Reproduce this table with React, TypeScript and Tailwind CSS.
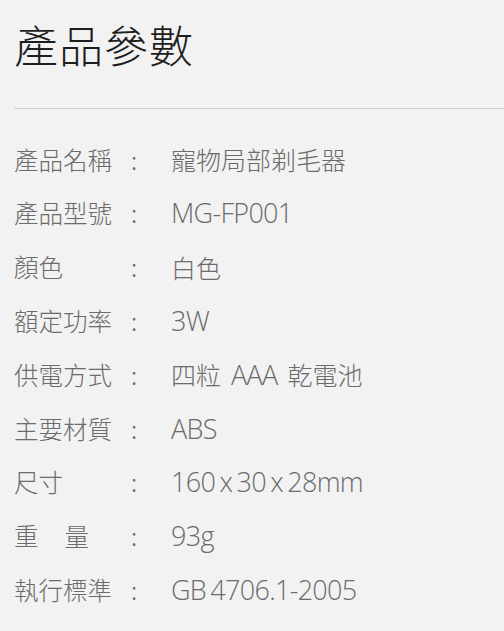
import React from "react";

const rows: { label: string[]; value: string }[] = [
  { label: ["產品名稱"], value: "寵物局部剃毛器" },
  { label: ["產品型號"], value: "MG-FP001" },
  { label: ["顏色"], value: "白色" },
  { label: ["額定功率"], value: "3W" },
  { label: ["供電方式"], value: "四粒 AAA 乾電池" },
  { label: ["主要材質"], value: "ABS" },
  { label: ["尺寸"], value: "160 x 30 x 28mm" },
  { label: ["重", "量"], value: "93g" },
  { label: ["執行標準"], value: "GB 4706.1-2005" },
];

function Value({ text }: { text: string }) {
  const parts = text.split(/([A-Za-z0-9.\-]+(?: [A-Za-z0-9.\-]+)*|\s+)/).filter((p) => p !== "");
  return (
    <div className="flex items-center whitespace-pre">
      {parts.map((p, i) =>
        /^\s+$/.test(p) ? (
          <span key={i} className="inline-block w-[10px]" />
        ) : /[A-Za-z0-9]/.test(p) ? (
          <span
            key={i}
            className="text-[27px] tracking-[-0.7px] [word-spacing:-2px]"
            style={{ fontFamily: '"Open Sans", "Noto Sans CJK TC", sans-serif' }}
          >
            {p}
          </span>
        ) : (
          <span key={i} className="text-[25px]">
            {p}
          </span>
        )
      )}
    </div>
  );
}

export default function App() {
  return (
    <div
      className="w-[504px] h-[631px] bg-[#f2f2f2] overflow-hidden"
      style={{ fontFamily: '"Noto Sans CJK TC", "Noto Sans", sans-serif' }}
    >
      <div className="pl-[14px] pt-[22px] h-[108px]">
        <h1 className="text-[44px] leading-[44px] text-[#1e1e1e] font-light tracking-[1px]">產品參數</h1>
      </div>
      <div className="ml-[14px] h-px bg-[#d2d2d2]" />
      <div className="pl-[14px] pt-[24px] flex flex-col">
        {rows.map((r, i) => (
          <div key={i} className="h-[53.8px] flex items-center text-[24.5px] text-[#6b6b6b] font-light">
            <div className="w-[98px] flex justify-between">
              {r.label.length > 1 ? (
                <>
                  <span>{r.label[0]}</span>
                  <span className="mr-[23px]">{r.label[1]}</span>
                </>
              ) : (
                <span>{r.label[0]}</span>
              )}
            </div>
            <div className="w-[59px] pl-[19px]">:</div>
            <Value text={r.value} />
          </div>
        ))}
      </div>
    </div>
  );
}
